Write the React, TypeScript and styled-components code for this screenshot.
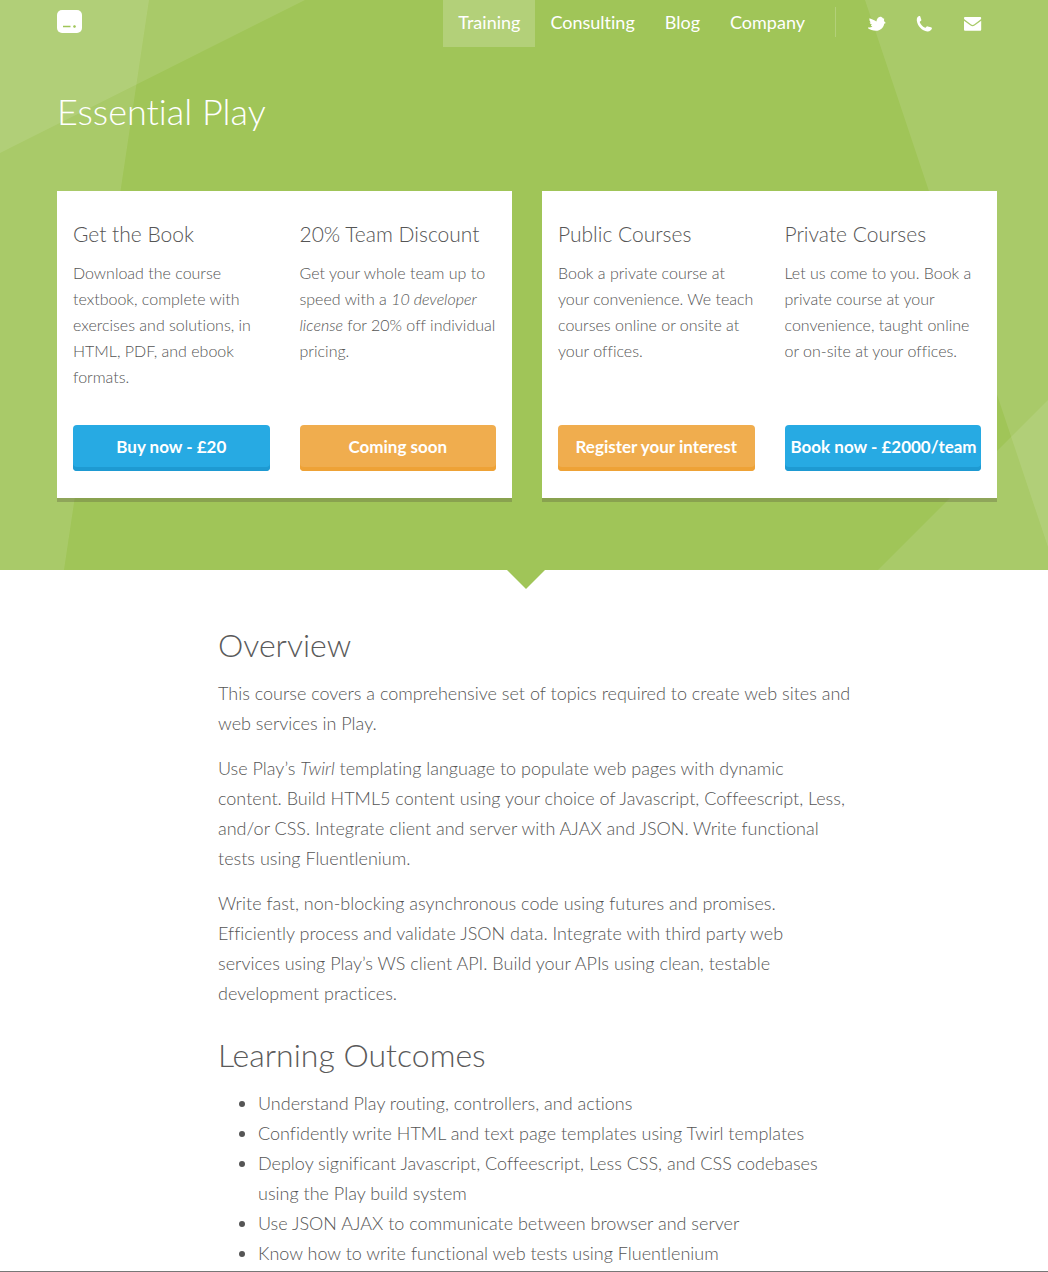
import React from "react";
import styled, { createGlobalStyle } from "styled-components";

const GlobalStyle = createGlobalStyle`
  *, *::before, *::after { box-sizing: border-box; }
  body {
    margin: 0;
    background: #fff;
    color: #555;
    font-family: Lato, "Liberation Sans", sans-serif;
    font-size: 18px;
    font-weight: 300;
    font-variant-ligatures: none;
    line-height: 30px;
  }
  h1, h2, h3, p, ul { margin: 0; font-weight: 300; }
`;

const Page = styled.div`
  border-bottom: 1px solid #777;
  padding-bottom: 3px;
`;

const Hero = styled.header`
  position: relative;
  background: #a0c558;
  padding: 0 51px 72px 57px;
  &::after {
    content: "";
    position: absolute;
    top: 100%;
    left: calc(50% - 17px);
    border: 19px solid transparent;
    border-top-color: #a0c558;
    border-bottom-width: 0;
  }
`;

const Facets = styled.svg`
  position: absolute;
  inset: 0;
  width: 100%;
  height: 100%;
  fill: rgba(255, 255, 255, 0.1);
`;

const HeroInner = styled.div`
  position: relative;
  max-width: 940px;
  margin: 0 auto;
`;

const TopBar = styled.div`
  display: flex;
  justify-content: space-between;
  align-items: flex-start;
`;

const LogoLink = styled.a`
  display: block;
  margin-top: 10px;
  svg { display: block; }
`;

const Nav = styled.nav`
  display: flex;
`;

const NavLink = styled.a<{ $active?: boolean }>`
  height: 47px;
  padding: 7px 15px;
  color: #fff;
  font-size: 18px;
  font-weight: 400;
  text-decoration: none;
  background: ${(p) => (p.$active ? "rgba(255, 255, 255, 0.2)" : "transparent")};
`;

const Divider = styled.span`
  width: 1px;
  height: 30px;
  margin: 7px 17px 0 15px;
  background: rgba(255, 255, 255, 0.2);
`;

const IconLink = styled.a`
  height: 47px;
  padding: 15px;
  svg { display: block; fill: #fff; }
`;

const Title = styled.h1`
  margin: 41px 0 57px;
  color: #fff;
  font-size: 36px;
  line-height: 46px;
`;

const Panels = styled.div`
  display: grid;
  grid-template-columns: repeat(2, minmax(0, 1fr));
  gap: 30px;
`;

const Panel = styled.section`
  display: grid;
  grid-template-columns: repeat(2, minmax(0, 1fr));
  gap: 30px;
  padding: 28px 16px 27px;
  background: #fff;
  box-shadow: 0 4px 0 rgba(90, 90, 60, 0.33);
`;

const Offer = styled.article`
  display: flex;
  flex-direction: column;
`;

const OfferTitle = styled.h3`
  font-size: 21px;
  line-height: 30px;
`;

const OfferText = styled.p`
  flex: 1;
  margin: 11px 0 35px;
  font-size: 16px;
  line-height: 26px;
`;

const ActionButton = styled.button<{ $tone: "blue" | "orange" }>`
  height: 46px;
  padding: 0 6px 4px;
  overflow: hidden;
  border: 0;
  border-radius: 4px;
  background: ${(p) => (p.$tone === "blue" ? "#27aae3" : "#f0ad4e")};
  box-shadow: inset 0 -4px 0 ${(p) => (p.$tone === "blue" ? "#1e9ad2" : "#eea236")};
  color: #fff;
  font-family: inherit;
  font-size: 17px;
  font-weight: 700;
  white-space: nowrap;
`;

const Content = styled.main`
  padding: 55px 51px 0 57px;
`;

const Column = styled.div`
  max-width: 940px;
  margin: 0 auto;
  padding-left: 161px;
`;

const SectionTitle = styled.h2`
  color: #5a5a5a;
  font-size: 32px;
  line-height: 40px;
`;

const Section = styled.section`
  max-width: 640px;
  & + & { margin-top: 27px; }
`;

const Paragraph = styled.p`
  margin-top: 13px;
  & + & { margin-top: 15px; }
`;

const Outcomes = styled.ul`
  margin-top: 13px;
  padding-left: 40px;
`;

const offers = [
  [
    { title: "Get the Book", text: <>Download the course textbook, complete with exercises and solutions, in HTML, PDF, and ebook formats.</>, action: "Buy now - £20", tone: "blue" },
    { title: "20% Team Discount", text: <>Get your whole team up to speed with a <em>10 developer license</em> for 20% off individual pricing.</>, action: "Coming soon", tone: "orange" },
  ],
  [
    { title: "Public Courses", text: <>Book a private course at your convenience. We teach courses online or onsite at your offices.</>, action: "Register your interest", tone: "orange" },
    { title: "Private Courses", text: <>Let us come to you. Book a private course at your convenience, taught online or on-site at your offices.</>, action: "Book now - £2000/team", tone: "blue" },
  ],
] as const;

const outcomes = [
  "Understand Play routing, controllers, and actions",
  "Confidently write HTML and text page templates using Twirl templates",
  "Deploy significant Javascript, Coffeescript, Less CSS, and CSS codebases using the Play build system",
  "Use JSON AJAX to communicate between browser and server",
  "Know how to write functional web tests using Fluentlenium",
];

export default function App() {
  return (
    <Page>
      <GlobalStyle />
      <Hero>
        <Facets viewBox="0 0 1048 570" preserveAspectRatio="none" aria-hidden="true">
          <polygon points="0,0 149,0 64,570 0,570" />
          <polygon points="0,0 305,0 0,153" />
          <polygon points="865,0 1048,0 1048,547" />
          <polygon points="1048,400 1048,570 878,570" />
        </Facets>
        <HeroInner>
          <TopBar>
            <LogoLink href="#" aria-label="Home">
              <svg width="25" height="23" viewBox="0 0 25 23">
                <rect width="25" height="23" rx="5" fill="#fff" />
                <path d="M6 16.5h7.5M16.2 16.5h2.6M17.5 15.200v2.600" stroke="#a0c558" strokeWidth="1.4" />
              </svg>
            </LogoLink>
            <Nav>
              <NavLink href="#" $active>Training</NavLink>
              <NavLink href="#">Consulting</NavLink>
              <NavLink href="#">Blog</NavLink>
              <NavLink href="#">Company</NavLink>
              <Divider />
              <IconLink href="#" aria-label="Twitter">
                <svg width="18" height="18" viewBox="0 0 18 18">
                  <path d="M-1 12.300C1.200 12.700 3 12.500 4.400 11.700 3.400 11.300 3 10.700 2.900 10.100L4.100 9.900C2.600 9.100 1.900 8.300 1.700 7.300L2.900 7.400C1.700 6.200 1.200 4.900 1.500 3.300 4 4.400 6.200 5.200 8.400 6.600 8.800 4 10.100 2.100 12.100 1.800 13.300 1.700 14.200 2.200 14.800 3.300L16.300 3.700 15.900 5.200C16.100 6.100 16.700 7.100 17.800 8L16.200 8.700C15.600 12.500 12.400 15.800 7.900 15.800 4.300 15.800.8 14.700-1 12.300Z" overflow="visible" />
                </svg>
              </IconLink>
              <IconLink href="#" aria-label="Phone">
                <svg width="18" height="18" viewBox="1 0 18 18">
                  <path d="M1.800 5.500C1.600 3.200 2.500 1.600 4.300 1.100 5 1 5.300 1.500 5.500 2.200L6.300 4.700C6.500 5.500 6 5.900 5.400 6.200 4.700 6.600 4.700 7 5 7.700 6 9.800 7.600 11.400 9.700 12.500 10.400 12.900 10.800 12.700 11.200 12.100 11.600 11.500 12 11.200 12.700 11.400L15.900 12.300C16.700 12.500 17.100 12.900 16.900 13.600 16.300 15.500 14.500 16.600 12.300 16.400 7 15.800 2.400 11 1.800 5.500Z" />
                </svg>
              </IconLink>
              <IconLink href="#" aria-label="Email">
                <svg width="18" height="18" viewBox="0 0 18 18">
                  <path d="M1.300 2h14.600C16.800 2 17.200 2.500 17.200 3.200 17.200 4 16.500 4.700 15.900 5.100L10.300 9.300C9.100 10.200 8.100 10.200 6.900 9.300L1.300 5.100C.7 4.700 0 4 0 3.200 0 2.500.4 2 1.300 2ZM0 5.700 6.200 10.300C7.900 11.500 9.300 11.500 11 10.300L17.200 5.700V14.400C17.200 15.300 16.700 15.800 15.900 15.800H1.300C.5 15.800 0 15.300 0 14.400Z" />
                </svg>
              </IconLink>
            </Nav>
          </TopBar>
          <Title>Essential Play</Title>
          <Panels>
            {offers.map((pair) => (
              <Panel key={pair[0].title}>
                {pair.map((o) => (
                  <Offer key={o.title}>
                    <OfferTitle>{o.title}</OfferTitle>
                    <OfferText>{o.text}</OfferText>
                    <ActionButton type="button" $tone={o.tone}>{o.action}</ActionButton>
                  </Offer>
                ))}
              </Panel>
            ))}
          </Panels>
        </HeroInner>
      </Hero>
      <Content>
        <Column>
          <Section>
            <SectionTitle>Overview</SectionTitle>
            <Paragraph>
              This course covers a comprehensive set of topics required to create web sites and<br />
              web services in Play.
            </Paragraph>
            <Paragraph>
              Use Play’s <em>Twirl</em> templating language to populate web pages with dynamic<br />
              content. Build HTML5 content using your choice of Javascript, Coffeescript, Less,<br />
              and/or CSS. Integrate client and server with AJAX and JSON. Write functional<br />
              tests using Fluentlenium.
            </Paragraph>
            <Paragraph>
              Write fast, non-blocking asynchronous code using futures and promises.<br />
              Efficiently process and validate JSON data. Integrate with third party web<br />
              services using Play’s WS client API. Build your APIs using clean, testable<br />
              development practices.
            </Paragraph>
          </Section>
          <Section>
            <SectionTitle>Learning Outcomes</SectionTitle>
            <Outcomes>
              {outcomes.map((o) => <li key={o}>{o}</li>)}
            </Outcomes>
          </Section>
        </Column>
      </Content>
    </Page>
  );
}
